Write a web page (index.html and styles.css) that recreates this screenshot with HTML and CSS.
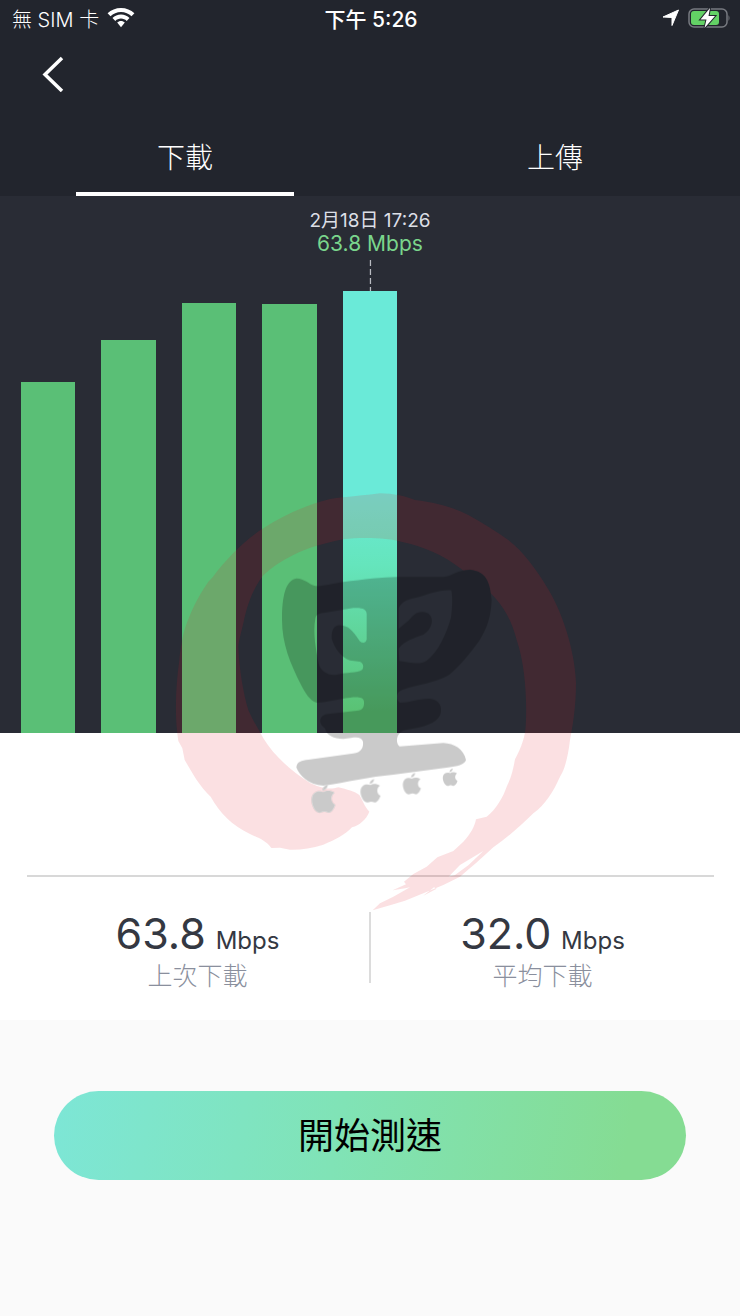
FILE: index.html
```html
<!doctype html>
<html lang="zh-Hant">
<head>
<meta charset="utf-8">
<meta name="viewport" content="width=device-width, initial-scale=1">
<title>測速</title>
<link rel="stylesheet" href="styles.css">
</head>
<body>

<header>
	<div class="status">
		<div class="carrier">
			<span>無 SIM 卡</span>
			<svg width="28" height="20" viewBox="0 0 28 20" fill="#fff">
				<path d="M14 0C8.800 0 4 2 .6 5.300L3.500 8.300C6.200 5.700 9.900 4.100 14 4.100s7.800 1.600 10.500 4.200l2.900-3C24 2 19.200 0 14 0z"/>
				<path d="M14 6.600c-3.300 0-6.300 1.300-8.500 3.400l2.800 2.900c1.500-1.400 3.500-2.300 5.700-2.300s4.200.9 5.700 2.300l2.800-2.900c-2.200-2.100-5.200-3.400-8.500-3.400z"/>
				<path d="M14 13c-1.500 0-2.800.6-3.800 1.500L14 19.200l3.800-4.700C16.800 13.600 15.500 13 14 13z"/>
			</svg>
		</div>
		<div class="clock">下午 5:26</div>
		<div class="power">
			<svg width="18" height="18" viewBox="0 0 18 18" fill="#fff" stroke="#fff" stroke-linejoin="round"><path d="M16.500 1L10 16.500V8.500L1 8z"/></svg>
			<svg width="42" height="22" viewBox="0 0 42 22">
				<rect x="1" y="2" width="38" height="18" rx="5" fill="none" stroke="#777a80" stroke-width="1.500"/>
				<path d="M40.500 8q2 3 0 6z" fill="#777a80"/>
				<rect x="3" y="4" width="28" height="14" rx="3" fill="#63d165"/>
				<path d="M22 1l-9.500 11.500h6L16.500 21 27 9h-6.500z" fill="#fff" stroke="#22252d" stroke-width="2" paint-order="stroke"/>
			</svg>
		</div>
	</div>
	<button class="back" type="button" aria-label="返回">
		<svg width="22" height="36" viewBox="0 0 22 36" fill="none" stroke="#fff" stroke-width="3.500"><path d="M20 2L3 18.500L20 35"/></svg>
	</button>
	<nav class="tabs">
		<button class="tab active" type="button">下載</button>
		<button class="tab" type="button">上傳</button>
	</nav>
</header>

<main>
	<section class="chart">
		<div class="bar" style="height:351px"></div>
		<div class="bar" style="height:393px"></div>
		<div class="bar" style="height:430px"></div>
		<div class="bar" style="height:429px"></div>
		<div class="bar selected" style="height:442px">
			<div class="tip">
				<span class="date">2月18日 17:26</span>
				<span class="speed">63.8 Mbps</span>
				<svg width="2" height="31" viewBox="0 0 2 31"><path d="M1 0v31" stroke="#b9bcc2" stroke-width="1.500" stroke-dasharray="6 3"/></svg>
			</div>
		</div>
	</section>

	<section class="summary">
		<div class="stat">
			<div class="figure"><b>63.8</b> Mbps</div>
			<div class="name">上次下載</div>
		</div>
		<div class="stat">
			<div class="figure"><b>32.0</b> Mbps</div>
			<div class="name">平均下載</div>
		</div>
	</section>

	<!-- brush ring with the cart mark, laid over chart and summary -->
	<svg class="watermark" viewBox="0 0 1290 1320" aria-hidden="true">
		<defs>
			<path id="apple" d="M36 18C44 13 58 12 70 20C56 30 58 50 72 56C68 70 58 82 50 80C42 76 36 76 28 80C12 84-2 56 1 36C4 18 20 12 36 18zM33 14C33 4 42-2 49-4C49 6 42 13 33 14z"/>
			<g id="mark">
				<path fill-rule="evenodd" d="M410 295C432 295 446 312 466 318C490 320 520 310 550 306C610 298 670 292 710 291L850 291C876 289 890 270 930 269C982 275 990 310 995 360C993 410 982 444 958 482C930 520 900 558 868 584C820 612 755 616 722 632C708 638 707 660 720 668C750 668 775 655 810 656C840 660 848 682 841 704C830 730 790 742 745 748C705 752 706 790 719 799L850 789C882 790 912 808 918 840C914 855 890 859 865 862L700 884C630 890 560 907 490 917C445 914 418 886 409 862C411 844 425 842 445 839L580 820C603 818 611 803 609 785C605 772 592 771 573 774C535 782 500 770 495 745C472 730 478 704 505 702L590 692C608 690 613 682 612 664C609 650 590 651 570 653C535 656 505 667 470 668C448 660 437 640 424 616C390 550 366 490 366 420C366 350 376 300 410 295z
					M466 415C469 402 478 400 495 398L580 384C607 382 620 388 620 402L620 478C617 490 608 490 600 484C585 462 570 440 550 437C525 430 514 445 515 475C523 505 545 533 570 541L600 545C610 550 612 560 607 569C590 580 560 576 530 584C505 588 480 572 476 550C468 510 458 460 466 415z
					M716 385C722 370 735 360 765 354C800 345 840 328 874 331C878 350 877 380 873 412C860 460 835 515 800 542C780 555 754 549 718 543L716 505C735 482 760 475 790 464C816 448 825 415 805 400C775 387 760 404 746 421L716 446z"/>
				<use href="#apple" x="454" y="918"/>
				<use href="#apple" transform="translate(601 900) scale(.84)"/>
				<use href="#apple" transform="translate(728 882) scale(.76)"/>
				<use href="#apple" transform="translate(848 868) scale(.62)"/>
			</g>
			<mask id="behind" maskUnits="userSpaceOnUse" x="0" y="0" width="1290" height="1320">
				<rect width="1290" height="1320" fill="#fff"/>
				<use href="#mark" fill="#000"/>
			</mask>
		</defs>
		<g mask="url(#behind)">
			<path class="ring" fill-rule="evenodd" d="M628 995C618 1020 598 1035 576 1042C555 1064 525 1080 490 1094C455 1105 420 1110 390 1109L360 1103L334 1104C318 1082 296 1074 270 1062C215 1035 180 1000 152 950C115 915 95 875 74 840L67 805L55 783C43 710 47 620 58 540C62 500 68 470 75 445C90 400 110 355 145 305L158 292C200 235 255 180 310 145C370 105 440 75 510 57C560 50 615 46 660 40C700 40 740 50 765 60C830 68 880 82 925 105C970 130 1010 155 1045 180C1090 215 1130 270 1160 320C1205 390 1245 510 1248 610C1248 680 1238 740 1230 780C1224 830 1214 870 1200 890C1180 935 1155 975 1120 1000C1085 1035 1045 1070 1000 1102C965 1135 930 1165 900 1190L850 1215L790 1240L735 1262L690 1276L638 1291L660 1270L700 1250L750 1222L735 1225L698 1231L738 1213L732 1205L760 1182L800 1160L832 1132L880 1113L910 1085C930 1065 945 1038 948 1018L980 1010C1008 988 1030 950 1040 920C1055 890 1060 865 1065 838C1085 800 1095 770 1097 740C1102 660 1095 550 1070 480C1050 400 1010 345 940 296L905 268C850 225 790 200 730 187C680 172 600 172 550 178C490 190 440 205 400 225C365 242 335 262 310 286C280 325 262 370 250 430C243 460 237 480 235 500C238 570 250 640 265 690C280 725 300 755 310 775C340 825 395 875 450 909C475 920 502 932 535 922C560 928 585 935 598 945C608 960 612 978 628 995z
				M866 1190L900 1155L970 1113L925 1156L884 1186z
				M790 1247L822 1222L830 1226z"/>
		</g>
		<use class="ink" href="#mark"/>
	</svg>
</main>

<footer>
	<button class="start" type="button">開始測速</button>
</footer>

</body>
</html>
```
FILE: styles.css
```css
* {
	box-sizing: border-box;
}
body {
	margin: 0;
	background: #fafafa;
	color: #343842;
	font-family: Inter, "Noto Sans CJK TC", sans-serif;
}
button {
	border: 0;
	padding: 0;
	background: none;
	color: inherit;
	font: inherit;
	cursor: pointer;
}
svg {
	display: block;
}

header {
	background: #22252d;
	color: #fff;
}
.status {
	display: grid;
	grid-template-columns: 1fr auto 1fr;
	align-items: center;
	height: 36px;
	padding: 0 10px 0 12px;
	font-size: 20px;
}
.carrier, .power {
	display: flex;
	align-items: center;
	gap: 8px;
}
.carrier {
	font-weight: 300;
}
.power {
	justify-content: flex-end;
}
.clock {
	font-size: 21px;
	font-weight: 500;
}
.back {
	display: block;
	margin: 20px 0 0 42px;
}
.tabs {
	display: flex;
	margin-top: 26px;
}
.tab {
	display: flex;
	flex: 1;
	flex-direction: column;
	align-items: center;
	justify-content: flex-end;
	height: 78px;
	font-size: 28px;
	font-weight: 300;
}
.tab::after {
	content: "";
	width: 59%;
	height: 4px;
	margin-top: 16px;
}
.tab.active::after {
	background: #fff;
}

main {
	position: relative;
}
.chart {
	display: grid;
	grid-template-columns: repeat(9, 1fr);
	gap: 26px;
	align-items: end;
	height: 537px;
	padding: 0 21px;
	background: #292c35;
}
.bar {
	background: #5abf76;
}
.bar.selected {
	position: relative;
	background: linear-gradient(#6aead8 0%, #6aead8 46%, #65e5bc 62%, #5ac274 95%);
}
.tip {
	position: absolute;
	bottom: 100%;
	left: 50%;
	transform: translateX(-50%);
	display: flex;
	flex-direction: column;
	align-items: center;
	white-space: nowrap;
	line-height: 24px;
}
.date {
	color: #dcdfe6;
	font-size: 19px;
	line-height: 22px;
}
.speed {
	margin-bottom: 4px;
	color: #7ad58c;
	font-size: 21px;
}

.summary {
	display: flex;
	height: 287px;
	padding: 179px 26px 37px;
	background: linear-gradient(#d8d8d8, #d8d8d8) center 142px / calc(100% - 53px) 2px no-repeat #fff;
}
.stat {
	flex: 1;
	text-align: center;
}
.stat + .stat {
	border-left: 2px solid #dcdcdc;
}
.figure {
	font-size: 24px;
	line-height: 42px;
}
.figure b {
	margin-right: 3px;
	font-size: 43px;
	font-weight: 400;
}
.name {
	color: #8a8f9d;
	font-size: 25px;
	font-weight: 300;
	line-height: 28px;
}

.watermark {
	position: absolute;
	top: 284px;
	left: 50%;
	width: 430px;
	margin-left: -210px;
	pointer-events: none;
}
.ring {
	fill: #e11928;
	opacity: .135;
}
.ink {
	opacity: .21;
}

footer {
	padding: 71px 54px;
}
.start {
	width: 100%;
	height: 89px;
	padding-bottom: 5px;
	border-radius: 45px;
	background: linear-gradient(100deg, #7de6d6, #80e3b6 45%, #85dc93 90%);
	color: #000;
	font-size: 36px;
}
```
